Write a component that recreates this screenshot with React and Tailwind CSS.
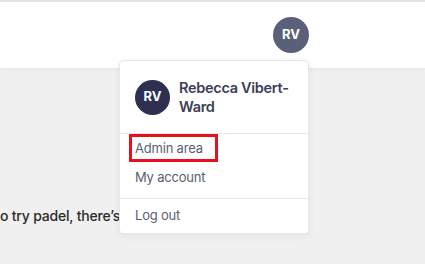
import React from 'react';

export default function App() {
  const font = { fontFamily: 'Inter, "Noto Sans", sans-serif' };

  return (
    <div className="relative h-[264px] w-[425px] overflow-hidden bg-[#f0f0f0]" style={font}>
      <header className="flex h-[68px] items-center justify-end border-t-2 border-[#e3e3e3] bg-white pr-[116px] shadow-[0_1px_3px_rgba(0,0,0,0.06)]">
        <div className="flex h-[36px] w-[36px] items-center justify-center rounded-full bg-[#5c5f78] text-[13px] font-bold text-white">
          RV
        </div>
      </header>

      <main className="pt-[138px]">
        <p className="whitespace-nowrap text-[14px] font-medium leading-[20px] tracking-[-0.2px] text-[#2b2b2b]">
          o try padel, there’s
        </p>
      </main>

      {/* user menu */}
      <div className="absolute left-[119px] top-[60px] w-[190px] rounded-[4px] border border-[#e6e6ec] bg-white shadow-[0_2px_8px_rgba(0,0,0,0.06)]">
        <div className="flex items-center gap-[9px] px-[15px] pb-[17px] pt-[17px]">
          <div className="flex h-[35px] w-[35px] shrink-0 items-center justify-center rounded-full bg-[#2d3050] text-[13px] font-bold text-white">
            RV
          </div>
          <div className="w-[122px] text-[14.5px] font-semibold leading-[19px] tracking-[-0.3px] text-[#3b3e56]">
            Rebecca Vibert-Ward
          </div>
        </div>

        <div className="border-t border-[#e8e8ee] pb-[6px]">
          <div className="relative flex h-[29px] items-center px-[15px] text-[13px] tracking-[-0.2px] text-[#5b5e70]">
            Admin area
            <span className="absolute left-[9px] top-0 h-[28px] w-[89px] border-[3px] border-[#e8101a]" />
          </div>
          <div className="flex h-[29px] items-center px-[15px] text-[13px] tracking-[-0.2px] text-[#5b5e70]">
            My account
          </div>
        </div>

        <div className="border-t border-[#e8e8ee] pb-[3px] pt-[2px]">
          <div className="flex h-[29px] items-center px-[15px] text-[13px] tracking-[-0.2px] text-[#5b5e70]">
            Log out
          </div>
        </div>
      </div>
    </div>
  );
}
